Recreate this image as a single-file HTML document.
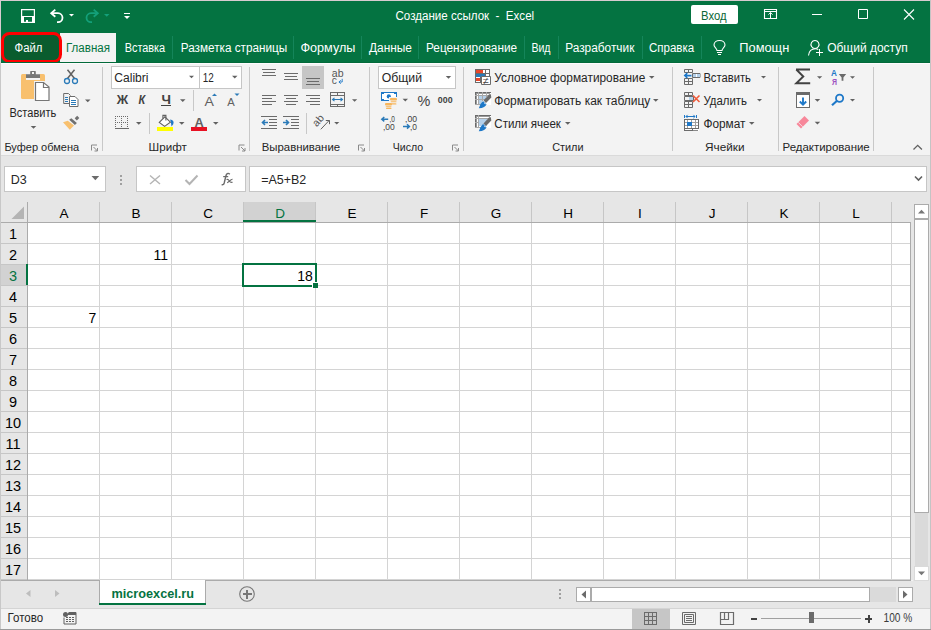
<!DOCTYPE html>
<html><head><meta charset="utf-8"><title>Excel</title>
<style>html,body{margin:0;padding:0;width:931px;height:630px;overflow:hidden;background:#fff}svg{display:block}text{white-space:pre}</style>
</head><body>
<svg width="931" height="630" viewBox="0 0 931 630" shape-rendering="crispEdges">
<rect x="0" y="0" width="931" height="630" fill="#f3f3f3" />
<rect x="0" y="0" width="931" height="63" fill="#047341" />
<rect x="0" y="0" width="931" height="1" fill="#d8ccd0" />
<rect x="0" y="0" width="1" height="63" fill="#d8ccd0" />
<rect x="0" y="63" width="1" height="567" fill="#c8c8c8" />
<rect x="930" y="0" width="1" height="630" fill="#c4c4c4" />
<text x="395.50" y="20" font-family="Liberation Sans" font-size="12" fill="#ffffff" textLength="138.64" lengthAdjust="spacingAndGlyphs">Создание ссылок  -  Excel</text>
<rect x="691" y="5" width="47" height="19" rx="2" fill="#ffffff" shape-rendering="geometricPrecision"/>
<text x="701.10" y="20" font-family="Liberation Sans" font-size="12.5" fill="#0b6636" textLength="25.46" lengthAdjust="spacingAndGlyphs">Вход</text>
<rect x="60" y="33" width="56" height="30" fill="#f3f3f3" />
<rect x="2.5" y="33.5" width="58" height="28" rx="7" ry="7" fill="#0a5c2e" stroke="#ff0000" stroke-width="3" shape-rendering="geometricPrecision"/>
<text x="14.60" y="52" font-family="Liberation Sans" font-size="12" fill="#ffffff" textLength="27.90" lengthAdjust="spacingAndGlyphs">Файл</text>
<text x="66.00" y="52" font-family="Liberation Sans" font-size="12" fill="#047341" textLength="43.98" lengthAdjust="spacingAndGlyphs">Главная</text>
<text x="124.70" y="52" font-family="Liberation Sans" font-size="12" fill="#ffffff" textLength="40.50" lengthAdjust="spacingAndGlyphs">Вставка</text>
<text x="180.80" y="52" font-family="Liberation Sans" font-size="12" fill="#ffffff" textLength="106.41" lengthAdjust="spacingAndGlyphs">Разметка страницы</text>
<text x="300.50" y="52" font-family="Liberation Sans" font-size="12" fill="#ffffff" textLength="54.86" lengthAdjust="spacingAndGlyphs">Формулы</text>
<text x="369.00" y="52" font-family="Liberation Sans" font-size="12" fill="#ffffff" textLength="42.88" lengthAdjust="spacingAndGlyphs">Данные</text>
<text x="426.00" y="52" font-family="Liberation Sans" font-size="12" fill="#ffffff" textLength="91.08" lengthAdjust="spacingAndGlyphs">Рецензирование</text>
<text x="531.40" y="52" font-family="Liberation Sans" font-size="12" fill="#ffffff" textLength="19.10" lengthAdjust="spacingAndGlyphs">Вид</text>
<text x="565.20" y="52" font-family="Liberation Sans" font-size="12" fill="#ffffff" textLength="69.16" lengthAdjust="spacingAndGlyphs">Разработчик</text>
<text x="649.00" y="52" font-family="Liberation Sans" font-size="12" fill="#ffffff" textLength="45.19" lengthAdjust="spacingAndGlyphs">Справка</text>
<text x="739.30" y="52" font-family="Liberation Sans" font-size="12" fill="#ffffff" textLength="49.97" lengthAdjust="spacingAndGlyphs">Помощн</text>
<text x="827.20" y="52" font-family="Liberation Sans" font-size="12" fill="#ffffff" textLength="80.50" lengthAdjust="spacingAndGlyphs">Общий доступ</text>
<rect x="172" y="36" width="1" height="23" fill="#15855a" />
<rect x="293" y="36" width="1" height="23" fill="#15855a" />
<rect x="361" y="36" width="1" height="23" fill="#15855a" />
<rect x="418" y="36" width="1" height="23" fill="#15855a" />
<rect x="524" y="36" width="1" height="23" fill="#15855a" />
<rect x="558" y="36" width="1" height="23" fill="#15855a" />
<rect x="642" y="36" width="1" height="23" fill="#15855a" />
<rect x="701" y="36" width="1" height="23" fill="#15855a" />
<rect x="1" y="63" width="929" height="92" fill="#f3f3f3" />
<rect x="1" y="155" width="929" height="1" fill="#dadada" />
<rect x="1" y="63" width="929" height="1" fill="#fdfbfd" />
<rect x="1" y="62" width="929" height="1" fill="#036a3a" />
<rect x="102" y="67" width="1" height="84" fill="#c8c8c8" />
<rect x="249" y="67" width="1" height="84" fill="#c8c8c8" />
<rect x="369" y="67" width="1" height="84" fill="#c8c8c8" />
<rect x="463" y="67" width="1" height="84" fill="#c8c8c8" />
<rect x="672" y="67" width="1" height="84" fill="#c8c8c8" />
<rect x="778" y="67" width="1" height="84" fill="#c8c8c8" />
<rect x="873" y="67" width="1" height="84" fill="#c8c8c8" />
<text x="4.40" y="151" font-family="Liberation Sans" font-size="11" fill="#262626" textLength="74.72" lengthAdjust="spacingAndGlyphs">Буфер обмена</text>
<text x="148.60" y="151" font-family="Liberation Sans" font-size="11" fill="#262626" textLength="38.24" lengthAdjust="spacingAndGlyphs">Шрифт</text>
<text x="261.70" y="151" font-family="Liberation Sans" font-size="11" fill="#262626" textLength="78.42" lengthAdjust="spacingAndGlyphs">Выравнивание</text>
<text x="392.80" y="151" font-family="Liberation Sans" font-size="11" fill="#262626" textLength="30.31" lengthAdjust="spacingAndGlyphs">Число</text>
<text x="552.20" y="151" font-family="Liberation Sans" font-size="11" fill="#262626" textLength="31.34" lengthAdjust="spacingAndGlyphs">Стили</text>
<text x="705.00" y="151" font-family="Liberation Sans" font-size="11" fill="#262626" textLength="39.55" lengthAdjust="spacingAndGlyphs">Ячейки</text>
<text x="782.50" y="151" font-family="Liberation Sans" font-size="11" fill="#262626" textLength="87.22" lengthAdjust="spacingAndGlyphs">Редактирование</text>
<text x="9.50" y="116.5" font-family="Liberation Sans" font-size="12" fill="#262626" textLength="46.73" lengthAdjust="spacingAndGlyphs">Вставить</text>
<rect x="111" y="66" width="89" height="23" fill="#ffffff" />
<rect x="111" y="66" width="89" height="1" fill="#c6c6c6" />
<rect x="111" y="88" width="89" height="1" fill="#c6c6c6" />
<rect x="111" y="66" width="1" height="23" fill="#c6c6c6" />
<rect x="199" y="66" width="1" height="23" fill="#c6c6c6" />
<rect x="199" y="66" width="43" height="23" fill="#ffffff" />
<rect x="199" y="66" width="43" height="1" fill="#c6c6c6" />
<rect x="199" y="88" width="43" height="1" fill="#c6c6c6" />
<rect x="199" y="66" width="1" height="23" fill="#c6c6c6" />
<rect x="241" y="66" width="1" height="23" fill="#c6c6c6" />
<text x="114.30" y="82" font-family="Liberation Sans" font-size="12" fill="#262626" textLength="34.17" lengthAdjust="spacingAndGlyphs">Calibri</text>
<text x="202.70" y="82" font-family="Liberation Sans" font-size="12" fill="#262626" textLength="11.03" lengthAdjust="spacingAndGlyphs">12</text>
<rect x="378" y="66" width="78" height="23" fill="#ffffff" />
<rect x="378" y="66" width="78" height="1" fill="#c6c6c6" />
<rect x="378" y="88" width="78" height="1" fill="#c6c6c6" />
<rect x="378" y="66" width="1" height="23" fill="#c6c6c6" />
<rect x="455" y="66" width="1" height="23" fill="#c6c6c6" />
<text x="381.70" y="82" font-family="Liberation Sans" font-size="12" fill="#262626" textLength="40.32" lengthAdjust="spacingAndGlyphs">Общий</text>
<text x="494.30" y="82" font-family="Liberation Sans" font-size="12" fill="#262626" textLength="150.98" lengthAdjust="spacingAndGlyphs">Условное форматирование</text>
<text x="494.30" y="105" font-family="Liberation Sans" font-size="12" fill="#262626" textLength="156.00" lengthAdjust="spacingAndGlyphs">Форматировать как таблицу</text>
<text x="494.30" y="128" font-family="Liberation Sans" font-size="12" fill="#262626" textLength="66.58" lengthAdjust="spacingAndGlyphs">Стили ячеек</text>
<text x="703.40" y="82" font-family="Liberation Sans" font-size="12" fill="#262626" textLength="47.54" lengthAdjust="spacingAndGlyphs">Вставить</text>
<text x="703.40" y="105" font-family="Liberation Sans" font-size="12" fill="#262626" textLength="43.54" lengthAdjust="spacingAndGlyphs">Удалить</text>
<text x="703.40" y="128" font-family="Liberation Sans" font-size="12" fill="#262626" textLength="42.10" lengthAdjust="spacingAndGlyphs">Формат</text>
<rect x="1" y="156" width="929" height="46" fill="#e6e6e6" />
<rect x="4" y="166" width="102" height="26" fill="#ffffff" />
<rect x="4" y="166" width="102" height="1" fill="#c6c6c6" />
<rect x="4" y="191" width="102" height="1" fill="#c6c6c6" />
<rect x="4" y="166" width="1" height="26" fill="#c6c6c6" />
<rect x="105" y="166" width="1" height="26" fill="#c6c6c6" />
<text x="10.64" y="184" font-family="Liberation Sans" font-size="13" fill="#262626" textLength="15.98" lengthAdjust="spacingAndGlyphs">D3</text>
<rect x="136" y="166" width="110" height="26" fill="#ffffff" />
<rect x="136" y="166" width="110" height="1" fill="#c6c6c6" />
<rect x="136" y="191" width="110" height="1" fill="#c6c6c6" />
<rect x="136" y="166" width="1" height="26" fill="#c6c6c6" />
<rect x="245" y="166" width="1" height="26" fill="#c6c6c6" />
<rect x="249" y="166" width="678" height="26" fill="#ffffff" />
<rect x="249" y="166" width="678" height="1" fill="#c6c6c6" />
<rect x="249" y="191" width="678" height="1" fill="#c6c6c6" />
<rect x="249" y="166" width="1" height="26" fill="#c6c6c6" />
<rect x="926" y="166" width="1" height="26" fill="#c6c6c6" />
<text x="261.20" y="184" font-family="Liberation Sans" font-size="13" fill="#262626" textLength="45.12" lengthAdjust="spacingAndGlyphs">=A5+B2</text>
<rect x="1" y="202" width="912" height="378" fill="#e6e6e6" />
<rect x="28" y="223" width="882" height="357" fill="#ffffff" />
<rect x="27" y="223" width="1" height="357" fill="#d4d4d4" />
<rect x="99" y="223" width="1" height="357" fill="#d4d4d4" />
<rect x="171" y="223" width="1" height="357" fill="#d4d4d4" />
<rect x="243" y="223" width="1" height="357" fill="#d4d4d4" />
<rect x="315" y="223" width="1" height="357" fill="#d4d4d4" />
<rect x="387" y="223" width="1" height="357" fill="#d4d4d4" />
<rect x="459" y="223" width="1" height="357" fill="#d4d4d4" />
<rect x="531" y="223" width="1" height="357" fill="#d4d4d4" />
<rect x="603" y="223" width="1" height="357" fill="#d4d4d4" />
<rect x="675" y="223" width="1" height="357" fill="#d4d4d4" />
<rect x="747" y="223" width="1" height="357" fill="#d4d4d4" />
<rect x="819" y="223" width="1" height="357" fill="#d4d4d4" />
<rect x="891" y="223" width="1" height="357" fill="#d4d4d4" />
<rect x="28" y="243" width="882" height="1" fill="#d4d4d4" />
<rect x="28" y="264" width="882" height="1" fill="#d4d4d4" />
<rect x="28" y="285" width="882" height="1" fill="#d4d4d4" />
<rect x="28" y="306" width="882" height="1" fill="#d4d4d4" />
<rect x="28" y="327" width="882" height="1" fill="#d4d4d4" />
<rect x="28" y="348" width="882" height="1" fill="#d4d4d4" />
<rect x="28" y="369" width="882" height="1" fill="#d4d4d4" />
<rect x="28" y="390" width="882" height="1" fill="#d4d4d4" />
<rect x="28" y="411" width="882" height="1" fill="#d4d4d4" />
<rect x="28" y="432" width="882" height="1" fill="#d4d4d4" />
<rect x="28" y="453" width="882" height="1" fill="#d4d4d4" />
<rect x="28" y="474" width="882" height="1" fill="#d4d4d4" />
<rect x="28" y="495" width="882" height="1" fill="#d4d4d4" />
<rect x="28" y="516" width="882" height="1" fill="#d4d4d4" />
<rect x="28" y="537" width="882" height="1" fill="#d4d4d4" />
<rect x="28" y="558" width="882" height="1" fill="#d4d4d4" />
<rect x="28" y="579" width="882" height="1" fill="#d4d4d4" />
<rect x="243" y="202" width="73" height="20" fill="#d2d2d2" />
<rect x="27" y="202" width="1" height="20" fill="#c6c6c6" />
<rect x="99" y="202" width="1" height="20" fill="#c6c6c6" />
<rect x="171" y="202" width="1" height="20" fill="#c6c6c6" />
<rect x="243" y="202" width="1" height="20" fill="#c6c6c6" />
<rect x="315" y="202" width="1" height="20" fill="#c6c6c6" />
<rect x="387" y="202" width="1" height="20" fill="#c6c6c6" />
<rect x="459" y="202" width="1" height="20" fill="#c6c6c6" />
<rect x="531" y="202" width="1" height="20" fill="#c6c6c6" />
<rect x="603" y="202" width="1" height="20" fill="#c6c6c6" />
<rect x="675" y="202" width="1" height="20" fill="#c6c6c6" />
<rect x="747" y="202" width="1" height="20" fill="#c6c6c6" />
<rect x="819" y="202" width="1" height="20" fill="#c6c6c6" />
<rect x="891" y="202" width="1" height="20" fill="#c6c6c6" />
<rect x="1" y="222" width="909" height="1" fill="#ababab" />
<rect x="243" y="220" width="73" height="2" fill="#047341" />
<text x="64" y="218" font-family="Liberation Sans" font-size="13.5" fill="#000000" text-anchor="middle">A</text>
<text x="136" y="218" font-family="Liberation Sans" font-size="13.5" fill="#000000" text-anchor="middle">B</text>
<text x="208" y="218" font-family="Liberation Sans" font-size="13.5" fill="#000000" text-anchor="middle">C</text>
<text x="280" y="218" font-family="Liberation Sans" font-size="13.5" fill="#047341" text-anchor="middle">D</text>
<text x="352" y="218" font-family="Liberation Sans" font-size="13.5" fill="#000000" text-anchor="middle">E</text>
<text x="424" y="218" font-family="Liberation Sans" font-size="13.5" fill="#000000" text-anchor="middle">F</text>
<text x="496" y="218" font-family="Liberation Sans" font-size="13.5" fill="#000000" text-anchor="middle">G</text>
<text x="568" y="218" font-family="Liberation Sans" font-size="13.5" fill="#000000" text-anchor="middle">H</text>
<text x="640" y="218" font-family="Liberation Sans" font-size="13.5" fill="#000000" text-anchor="middle">I</text>
<text x="712" y="218" font-family="Liberation Sans" font-size="13.5" fill="#000000" text-anchor="middle">J</text>
<text x="784" y="218" font-family="Liberation Sans" font-size="13.5" fill="#000000" text-anchor="middle">K</text>
<text x="856" y="218" font-family="Liberation Sans" font-size="13.5" fill="#000000" text-anchor="middle">L</text>
<rect x="1" y="264" width="26" height="21" fill="#d2d2d2" />
<rect x="1" y="243" width="26" height="1" fill="#c6c6c6" />
<rect x="1" y="264" width="26" height="1" fill="#c6c6c6" />
<rect x="1" y="285" width="26" height="1" fill="#c6c6c6" />
<rect x="1" y="306" width="26" height="1" fill="#c6c6c6" />
<rect x="1" y="327" width="26" height="1" fill="#c6c6c6" />
<rect x="1" y="348" width="26" height="1" fill="#c6c6c6" />
<rect x="1" y="369" width="26" height="1" fill="#c6c6c6" />
<rect x="1" y="390" width="26" height="1" fill="#c6c6c6" />
<rect x="1" y="411" width="26" height="1" fill="#c6c6c6" />
<rect x="1" y="432" width="26" height="1" fill="#c6c6c6" />
<rect x="1" y="453" width="26" height="1" fill="#c6c6c6" />
<rect x="1" y="474" width="26" height="1" fill="#c6c6c6" />
<rect x="1" y="495" width="26" height="1" fill="#c6c6c6" />
<rect x="1" y="516" width="26" height="1" fill="#c6c6c6" />
<rect x="1" y="537" width="26" height="1" fill="#c6c6c6" />
<rect x="1" y="558" width="26" height="1" fill="#c6c6c6" />
<rect x="1" y="579" width="26" height="1" fill="#c6c6c6" />
<rect x="27" y="202" width="1" height="378" fill="#ababab" />
<rect x="26" y="264" width="2" height="21" fill="#047341" />
<text x="13" y="239" font-family="Liberation Sans" font-size="14.5" fill="#000000" text-anchor="middle">1</text>
<text x="13" y="260" font-family="Liberation Sans" font-size="14.5" fill="#000000" text-anchor="middle">2</text>
<text x="13" y="281" font-family="Liberation Sans" font-size="14.5" fill="#047341" text-anchor="middle">3</text>
<text x="13" y="302" font-family="Liberation Sans" font-size="14.5" fill="#000000" text-anchor="middle">4</text>
<text x="13" y="323" font-family="Liberation Sans" font-size="14.5" fill="#000000" text-anchor="middle">5</text>
<text x="13" y="344" font-family="Liberation Sans" font-size="14.5" fill="#000000" text-anchor="middle">6</text>
<text x="13" y="365" font-family="Liberation Sans" font-size="14.5" fill="#000000" text-anchor="middle">7</text>
<text x="13" y="386" font-family="Liberation Sans" font-size="14.5" fill="#000000" text-anchor="middle">8</text>
<text x="13" y="407" font-family="Liberation Sans" font-size="14.5" fill="#000000" text-anchor="middle">9</text>
<text x="13" y="428" font-family="Liberation Sans" font-size="14.5" fill="#000000" text-anchor="middle">10</text>
<text x="13" y="449" font-family="Liberation Sans" font-size="14.5" fill="#000000" text-anchor="middle">11</text>
<text x="13" y="470" font-family="Liberation Sans" font-size="14.5" fill="#000000" text-anchor="middle">12</text>
<text x="13" y="491" font-family="Liberation Sans" font-size="14.5" fill="#000000" text-anchor="middle">13</text>
<text x="13" y="512" font-family="Liberation Sans" font-size="14.5" fill="#000000" text-anchor="middle">14</text>
<text x="13" y="533" font-family="Liberation Sans" font-size="14.5" fill="#000000" text-anchor="middle">15</text>
<text x="13" y="554" font-family="Liberation Sans" font-size="14.5" fill="#000000" text-anchor="middle">16</text>
<text x="13" y="575" font-family="Liberation Sans" font-size="14.5" fill="#000000" text-anchor="middle">17</text>
<rect x="910" y="222" width="1" height="359" fill="#ababab" />
<rect x="1" y="580" width="910" height="1" fill="#ababab" />
<text x="168" y="259.5" font-family="Liberation Sans" font-size="14" fill="#000000" text-anchor="end">11</text>
<text x="312.9" y="280.7" font-family="Liberation Sans" font-size="14" fill="#000000" text-anchor="end">18</text>
<text x="96.3" y="322.9" font-family="Liberation Sans" font-size="14" fill="#000000" text-anchor="end">7</text>
<rect x="242" y="263" width="75" height="2" fill="#047341" />
<rect x="242" y="285" width="75" height="2" fill="#047341" />
<rect x="242" y="263" width="2" height="24" fill="#047341" />
<rect x="315" y="263" width="2" height="24" fill="#047341" />
<rect x="312" y="282" width="6" height="6" fill="#ffffff" />
<rect x="313" y="283" width="5" height="5" fill="#047341" />
<rect x="1" y="581" width="929" height="27" fill="#e6e6e6" />
<rect x="99" y="580" width="107" height="24" fill="#ffffff" />
<rect x="99" y="580" width="1" height="24" fill="#ababab" />
<rect x="205" y="580" width="1" height="24" fill="#ababab" />
<rect x="99" y="603" width="107" height="2" fill="#047341" />
<text x="111.50" y="598" font-family="Liberation Sans" font-size="13.5" fill="#047341" font-weight="bold" textLength="82.53" lengthAdjust="spacingAndGlyphs">microexcel.ru</text>
<rect x="1" y="608" width="929" height="1" fill="#d4d4d4" />
<rect x="1" y="609" width="929" height="20" fill="#f3f3f3" />
<rect x="0" y="629" width="931" height="1" fill="#9a9a9a" />
<text x="7.60" y="622" font-family="Liberation Sans" font-size="12" fill="#262626" textLength="35.59" lengthAdjust="spacingAndGlyphs">Готово</text>
<rect x="632" y="609" width="38" height="20" fill="#c6c6c6" />
<text x="883.60" y="622" font-family="Liberation Sans" font-size="12" fill="#3a3a3a" textLength="28.72" lengthAdjust="spacingAndGlyphs">100 %</text>
<path d="M21.6 9.6H34.4V22.4H21.6Z" fill="none" stroke="#ffffff" stroke-width="1.2" shape-rendering="geometricPrecision"/>
<rect x="21" y="16" width="14" height="1" fill="#ffffff" />
<rect x="21" y="16" width="3" height="7" fill="#ffffff" />
<rect x="32" y="16" width="3" height="7" fill="#ffffff" />
<rect x="26" y="20" width="2" height="2" fill="#ffffff" />
<path d="M51.5 13.2H58A4.5 4.5 0 0 1 58 22.2H57" fill="none" stroke="#ffffff" stroke-width="1.8" shape-rendering="geometricPrecision"/>
<path d="M55.3 9.6L51.2 13.2L55.3 16.8" fill="none" stroke="#ffffff" stroke-width="1.8" shape-rendering="geometricPrecision"/>
<path d="M69 14L74 14L71.5 16.5Z" fill="#ffffff" shape-rendering="geometricPrecision"/>
<path d="M97.5 13.2H91A4.5 4.5 0 0 0 91 22.2H92" fill="none" stroke="#14a07a" stroke-width="1.8" shape-rendering="geometricPrecision"/>
<path d="M93.7 9.6L97.8 13.2L93.7 16.8" fill="none" stroke="#14a07a" stroke-width="1.8" shape-rendering="geometricPrecision"/>
<path d="M104 14L109.5 14L106.75 16.75Z" fill="#14a07a" shape-rendering="geometricPrecision"/>
<rect x="124" y="13" width="6" height="1" fill="#ffffff" />
<path d="M124 16L130 16L127.0 19.0Z" fill="#ffffff" shape-rendering="geometricPrecision"/>
<path d="M764.5 9.5H776.5V18.5H764.5Z" fill="none" stroke="#ffffff" stroke-width="1.1" shape-rendering="geometricPrecision"/>
<rect x="765" y="11" width="11" height="1" fill="#ffffff" />
<path d="M770.5 18.5V12.5M768.5 14.6L770.5 12.6L772.5 14.6" fill="none" stroke="#ffffff" stroke-width="1" shape-rendering="geometricPrecision"/>
<rect x="812" y="14" width="10" height="1" fill="#ffffff" />
<path d="M858.5 9.5H867.5V18.5H858.5Z" fill="none" stroke="#ffffff" stroke-width="1" shape-rendering="geometricPrecision"/>
<path d="M904 9.5L914 19.5M914 9.5L904 19.5" fill="none" stroke="#ffffff" stroke-width="1.1" shape-rendering="geometricPrecision"/>
<path d="M717 50.5C717 48.5 714 47.2 714 45C714 42.2 716.5 40.5 719.5 40.5C722.5 40.5 725 42.2 725 45C725 47.2 722 48.5 722 50.5Z" fill="none" stroke="#ffffff" stroke-width="1.1" shape-rendering="geometricPrecision"/>
<rect x="717" y="52" width="5" height="1" fill="#ffffff" />
<rect x="718" y="54" width="3" height="1" fill="#ffffff" />
<path d="M815 40.5A4 4 0 1 1 814.99 40.5Z" fill="none" stroke="#ffffff" stroke-width="1.1" shape-rendering="geometricPrecision"/>
<path d="M808.5 55.5C809 51 812 48.8 815.5 48.8C816.5 48.8 817.5 49 818.3 49.4" fill="none" stroke="#ffffff" stroke-width="1.1" shape-rendering="geometricPrecision"/>
<rect x="816" y="52" width="7" height="1" fill="#ffffff" />
<rect x="819" y="49" width="1" height="7" fill="#ffffff" />
<rect x="21" y="74" width="24" height="25" rx="1.5" fill="#f8c06e" shape-rendering="geometricPrecision"/>
<rect x="26" y="74" width="14" height="6" fill="#f3f3f3" />
<path d="M26 74.2H30.2V71.5Q30.2 71 30.7 71H35.3Q35.8 71 35.8 71.5V74.2H40V78H26Z" fill="#767676" shape-rendering="geometricPrecision"/>
<rect x="32" y="72" width="2" height="2" fill="#f3f3f3" />
<path d="M34 81V101.5H50V86.5L44.5 81Z" fill="#f3f3f3" shape-rendering="geometricPrecision"/>
<path d="M35.5 82.5V100.5H49V87L43.5 82.5Z" fill="#ffffff" stroke="#767676" stroke-width="1.2" shape-rendering="geometricPrecision"/>
<path d="M43.5 82.5V87.5H49" fill="none" stroke="#767676" stroke-width="1.2" shape-rendering="geometricPrecision"/>
<path d="M30.7 126L36.3 126L33.5 128.8Z" fill="#616161" shape-rendering="geometricPrecision"/>
<path d="M67.5 69.8L74.5 78.5" fill="none" stroke="#616161" stroke-width="1.5" shape-rendering="geometricPrecision"/>
<path d="M74.5 69.8L67.5 78.5" fill="none" stroke="#616161" stroke-width="1.5" shape-rendering="geometricPrecision"/>
<circle cx="67" cy="81" r="2.5" fill="none" stroke="#2a7ab8" stroke-width="1.3" shape-rendering="geometricPrecision"/>
<circle cx="75" cy="81" r="2.5" fill="none" stroke="#2a7ab8" stroke-width="1.3" shape-rendering="geometricPrecision"/>
<path d="M63.7 93.5V103.5H69.5M63.7 93.5H68.5L70.5 95.5" fill="none" stroke="#6b6b6b" stroke-width="1" shape-rendering="geometricPrecision"/>
<path d="M69.5 96.5V106.5H78V99.5L75 96.5Z" fill="#ffffff" stroke="#6b6b6b" stroke-width="1" shape-rendering="geometricPrecision"/>
<rect x="65" y="97" width="3" height="1" fill="#2a7ab8" />
<rect x="65" y="99" width="3" height="1" fill="#2a7ab8" />
<rect x="65" y="101" width="3" height="1" fill="#2a7ab8" />
<rect x="71" y="100" width="5" height="1" fill="#2a7ab8" />
<rect x="71" y="102" width="5" height="1" fill="#2a7ab8" />
<rect x="71" y="104" width="5" height="1" fill="#2a7ab8" />
<path d="M85 99.5L90.5 99.5L87.75 102.25Z" fill="#616161" shape-rendering="geometricPrecision"/>
<path d="M77.2 115.8L79.3 117.9L76.8 120.4L74.7 118.3Z" fill="#707070" shape-rendering="geometricPrecision"/>
<path d="M71.3 118.2L76.9 123L74.9 124.9L69.2 119.7Z" fill="#707070" shape-rendering="geometricPrecision"/>
<path d="M63 122.3L67.8 120.7L74 125.6L69.8 129.7Z" fill="#f8c06e" shape-rendering="geometricPrecision"/>
<path d="M91.5 150.5V145.0H97" fill="none" stroke="#8a8a8a" stroke-width="1" shape-rendering="geometricPrecision"/>
<path d="M93.5 147.0L97.5 151.0M97.5 148.0V151.0H94.5" fill="none" stroke="#8a8a8a" stroke-width="1" shape-rendering="geometricPrecision"/>
<path d="M239.0 150.5V145.0H244.5" fill="none" stroke="#8a8a8a" stroke-width="1" shape-rendering="geometricPrecision"/>
<path d="M241.0 147.0L245.0 151.0M245.0 148.0V151.0H242.0" fill="none" stroke="#8a8a8a" stroke-width="1" shape-rendering="geometricPrecision"/>
<path d="M358.5 150.5V145.0H364" fill="none" stroke="#8a8a8a" stroke-width="1" shape-rendering="geometricPrecision"/>
<path d="M360.5 147.0L364.5 151.0M364.5 148.0V151.0H361.5" fill="none" stroke="#8a8a8a" stroke-width="1" shape-rendering="geometricPrecision"/>
<path d="M452.5 150.5V145.0H458" fill="none" stroke="#8a8a8a" stroke-width="1" shape-rendering="geometricPrecision"/>
<path d="M454.5 147.0L458.5 151.0M458.5 148.0V151.0H455.5" fill="none" stroke="#8a8a8a" stroke-width="1" shape-rendering="geometricPrecision"/>
<path d="M189 75.7L194 75.7L191.5 78.2Z" fill="#616161" shape-rendering="geometricPrecision"/>
<path d="M232 75.7L237.5 75.7L234.75 78.45Z" fill="#616161" shape-rendering="geometricPrecision"/>
<text x="116.75" y="104.3" font-family="Liberation Sans" font-size="12" fill="#424242" font-weight="bold" textLength="11.39" lengthAdjust="spacingAndGlyphs">Ж</text>
<text x="138.60" y="104.3" font-family="Liberation Sans" font-size="12" fill="#424242" font-weight="bold" font-style="italic" textLength="6.72" lengthAdjust="spacingAndGlyphs">К</text>
<text x="161.50" y="104.3" font-family="Liberation Sans" font-size="12" fill="#424242" font-weight="bold" textLength="9.49" lengthAdjust="spacingAndGlyphs">Ч</text>
<rect x="161" y="105" width="10" height="1" fill="#424242" />
<path d="M180 99.3L185.5 99.3L182.75 102.05Z" fill="#616161" shape-rendering="geometricPrecision"/>
<rect x="193" y="90" width="1" height="21" fill="#c8c8c8" />
<text x="204.40" y="105.8" font-family="Liberation Sans" font-size="13.5" fill="#616161" textLength="9.40" lengthAdjust="spacingAndGlyphs">A</text>
<path d="M212 96L214.5 93.5L217 96Z" fill="#2a7ab8" shape-rendering="geometricPrecision"/>
<text x="227.30" y="105.8" font-family="Liberation Sans" font-size="10.5" fill="#616161" textLength="7.50" lengthAdjust="spacingAndGlyphs">A</text>
<path d="M234.5 93.5L239.5 93.5L237 96Z" fill="#2a7ab8" shape-rendering="geometricPrecision"/>
<rect x="115" y="116" width="1" height="1" fill="#6b6b6b" />
<rect x="115" y="118" width="1" height="1" fill="#6b6b6b" />
<rect x="115" y="120" width="1" height="1" fill="#6b6b6b" />
<rect x="115" y="122" width="1" height="1" fill="#6b6b6b" />
<rect x="115" y="124" width="1" height="1" fill="#6b6b6b" />
<rect x="115" y="126" width="1" height="1" fill="#6b6b6b" />
<rect x="117" y="116" width="1" height="1" fill="#6b6b6b" />
<rect x="117" y="122" width="1" height="1" fill="#6b6b6b" />
<rect x="119" y="116" width="1" height="1" fill="#6b6b6b" />
<rect x="119" y="122" width="1" height="1" fill="#6b6b6b" />
<rect x="121" y="116" width="1" height="1" fill="#6b6b6b" />
<rect x="121" y="118" width="1" height="1" fill="#6b6b6b" />
<rect x="121" y="120" width="1" height="1" fill="#6b6b6b" />
<rect x="121" y="122" width="1" height="1" fill="#6b6b6b" />
<rect x="121" y="124" width="1" height="1" fill="#6b6b6b" />
<rect x="121" y="126" width="1" height="1" fill="#6b6b6b" />
<rect x="123" y="116" width="1" height="1" fill="#6b6b6b" />
<rect x="123" y="122" width="1" height="1" fill="#6b6b6b" />
<rect x="125" y="116" width="1" height="1" fill="#6b6b6b" />
<rect x="125" y="122" width="1" height="1" fill="#6b6b6b" />
<rect x="127" y="116" width="1" height="1" fill="#6b6b6b" />
<rect x="127" y="118" width="1" height="1" fill="#6b6b6b" />
<rect x="127" y="120" width="1" height="1" fill="#6b6b6b" />
<rect x="127" y="122" width="1" height="1" fill="#6b6b6b" />
<rect x="127" y="124" width="1" height="1" fill="#6b6b6b" />
<rect x="127" y="126" width="1" height="1" fill="#6b6b6b" />
<rect x="115" y="128" width="14" height="1" fill="#6b6b6b" />
<path d="M136 122L141.5 122L138.75 124.75Z" fill="#616161" shape-rendering="geometricPrecision"/>
<rect x="149" y="113" width="1" height="21" fill="#c8c8c8" />
<path d="M159.3 122.4L164.9 116.8L170.4 122.1L164.6 126.4Z" fill="#ffffff" stroke="#616161" stroke-width="1.1" shape-rendering="geometricPrecision"/>
<path d="M162.9 118.6V115.4H165.9V120.6" fill="none" stroke="#616161" stroke-width="1.1" shape-rendering="geometricPrecision"/>
<path d="M170 119.5Q174.8 120.3 173.2 124.2L171.5 126.5L170.8 121.8Z" fill="#1e78c8" shape-rendering="geometricPrecision"/>
<rect x="157" y="127" width="16" height="4" fill="#ffff00" />
<path d="M179 122L184.5 122L181.75 124.75Z" fill="#616161" shape-rendering="geometricPrecision"/>
<text x="194.50" y="126.8" font-family="Liberation Sans" font-size="13.5" fill="#616161" font-weight="bold" textLength="9.26" lengthAdjust="spacingAndGlyphs">A</text>
<rect x="191" y="127" width="16" height="4" fill="#e81123" />
<path d="M213 122L218.5 122L215.75 124.75Z" fill="#616161" shape-rendering="geometricPrecision"/>
<rect x="262" y="69" width="14" height="1" fill="#6b6b6b" />
<rect x="263" y="72" width="12" height="1" fill="#6b6b6b" />
<rect x="262" y="75" width="14" height="1" fill="#6b6b6b" />
<rect x="284" y="73" width="14" height="1" fill="#6b6b6b" />
<rect x="285" y="76" width="12" height="1" fill="#6b6b6b" />
<rect x="284" y="79" width="14" height="1" fill="#6b6b6b" />
<rect x="302" y="66" width="22" height="23" fill="#c6c6c6" />
<rect x="306" y="78" width="14" height="1" fill="#6b6b6b" />
<rect x="307" y="81" width="12" height="1" fill="#6b6b6b" />
<rect x="306" y="84" width="14" height="1" fill="#6b6b6b" />
<text x="331.80" y="76.5" font-family="Liberation Sans" font-size="10.5" fill="#555555" textLength="11.74" lengthAdjust="spacingAndGlyphs">ab</text>
<text x="331.80" y="84.2" font-family="Liberation Sans" font-size="10.5" fill="#555555" textLength="5.15" lengthAdjust="spacingAndGlyphs">c</text>
<path d="M342.2 78.8V82H339M340.8 80.3L338.9 82L340.8 83.7" fill="none" stroke="#1e78c8" stroke-width="0.9" shape-rendering="geometricPrecision"/>
<rect x="262" y="95" width="14" height="1" fill="#6b6b6b" />
<rect x="262" y="98" width="10" height="1" fill="#6b6b6b" />
<rect x="262" y="101" width="14" height="1" fill="#6b6b6b" />
<rect x="262" y="104" width="10" height="1" fill="#6b6b6b" />
<rect x="284" y="95" width="14" height="1" fill="#6b6b6b" />
<rect x="286" y="98" width="10" height="1" fill="#6b6b6b" />
<rect x="284" y="101" width="14" height="1" fill="#6b6b6b" />
<rect x="286" y="104" width="10" height="1" fill="#6b6b6b" />
<rect x="306" y="95" width="14" height="1" fill="#6b6b6b" />
<rect x="310" y="98" width="10" height="1" fill="#6b6b6b" />
<rect x="306" y="101" width="14" height="1" fill="#6b6b6b" />
<rect x="310" y="104" width="10" height="1" fill="#6b6b6b" />
<rect x="330" y="92" width="15" height="1" fill="#6b6b6b" />
<rect x="330" y="106" width="15" height="1" fill="#6b6b6b" />
<rect x="330" y="92" width="1" height="15" fill="#6b6b6b" />
<rect x="344" y="92" width="1" height="15" fill="#6b6b6b" />
<rect x="330" y="95" width="15" height="1" fill="#6b6b6b" />
<rect x="330" y="104" width="15" height="1" fill="#6b6b6b" />
<rect x="337" y="92" width="1" height="3" fill="#6b6b6b" />
<rect x="337" y="104" width="1" height="3" fill="#6b6b6b" />
<path d="M332.5 99.5H342.5M334.5 97.8L332.5 99.5L334.5 101.2M340.5 97.8L342.5 99.5L340.5 101.2" fill="none" stroke="#2a7ab8" stroke-width="1.1" shape-rendering="geometricPrecision"/>
<path d="M352 99.2L357.2 99.2L354.6 101.8Z" fill="#616161" shape-rendering="geometricPrecision"/>
<rect x="261" y="116" width="16" height="1" fill="#6b6b6b" />
<rect x="261" y="128" width="16" height="1" fill="#6b6b6b" />
<rect x="269" y="119" width="8" height="1" fill="#6b6b6b" />
<rect x="269" y="122" width="8" height="1" fill="#6b6b6b" />
<rect x="269" y="125" width="8" height="1" fill="#6b6b6b" />
<path d="M268 122.5H262.5M265 120L262.5 122.5L265 125" fill="none" stroke="#2a7ab8" stroke-width="1.6" shape-rendering="geometricPrecision"/>
<rect x="283" y="116" width="16" height="1" fill="#6b6b6b" />
<rect x="283" y="128" width="16" height="1" fill="#6b6b6b" />
<rect x="291" y="119" width="8" height="1" fill="#6b6b6b" />
<rect x="291" y="122" width="8" height="1" fill="#6b6b6b" />
<rect x="291" y="125" width="8" height="1" fill="#6b6b6b" />
<path d="M283 122.5H288.5M286 120L288.5 122.5L286 125" fill="none" stroke="#2a7ab8" stroke-width="1.6" shape-rendering="geometricPrecision"/>
<rect x="306" y="113" width="1" height="21" fill="#c8c8c8" />
<text x="0" y="0" font-family="Liberation Sans" font-size="10.5" fill="#555555" transform="translate(316.8 127.2) rotate(-48)">ab</text>
<path d="M320.8 129.3L329.3 120.3M325.8 120.5H329.5V124.2" fill="none" stroke="#616161" stroke-width="1" shape-rendering="geometricPrecision"/>
<path d="M334.2 122L339.3 122L336.75 124.55000000000001Z" fill="#616161" shape-rendering="geometricPrecision"/>
<path d="M445.8 76L451.2 76L448.5 78.69999999999999Z" fill="#616161" shape-rendering="geometricPrecision"/>
<rect x="381" y="92" width="16" height="9" fill="#1e78c8" />
<rect x="382" y="94" width="14" height="5" fill="#ffffff" />
<rect x="384" y="93" width="10" height="7" fill="#ffffff" />
<circle cx="388.8" cy="96.4" r="2.1" fill="#1e78c8" shape-rendering="geometricPrecision"/>
<rect x="389" y="97" width="9" height="5" fill="#f3f3f3" />
<rect x="384" y="102" width="9" height="7" fill="#f3f3f3" />
<rect x="390" y="98" width="7" height="2.6" rx="1" fill="#f8b65c" shape-rendering="geometricPrecision"/>
<rect x="390.6" y="101.2" width="6" height="1.1" rx="1" fill="#f8b65c" shape-rendering="geometricPrecision"/>
<rect x="391" y="103.3" width="5.5" height="1.2" rx="1" fill="#f8b65c" shape-rendering="geometricPrecision"/>
<rect x="385" y="103" width="7" height="2.6" rx="1" fill="#f8b65c" shape-rendering="geometricPrecision"/>
<rect x="385.6" y="106.2" width="6" height="1.1" rx="1" fill="#f8b65c" shape-rendering="geometricPrecision"/>
<rect x="386" y="107.8" width="5.5" height="1.2" rx="1" fill="#f8b65c" shape-rendering="geometricPrecision"/>
<path d="M402.6 98.8L408 98.8L405.3 101.49999999999999Z" fill="#616161" shape-rendering="geometricPrecision"/>
<text x="417.50" y="106" font-family="Liberation Sans" font-size="15" fill="#424242" textLength="12.82" lengthAdjust="spacingAndGlyphs">%</text>
<text x="437.80" y="103" font-family="Liberation Sans" font-size="9.5" fill="#424242" font-weight="bold" textLength="14.76" lengthAdjust="spacingAndGlyphs">000</text>
<path d="M388.2 119.2H381.8M384.3 117L381.8 119.2L384.3 121.4" fill="none" stroke="#2a7ab8" stroke-width="1.5" shape-rendering="geometricPrecision"/>
<text x="389.50" y="121.8" font-family="Liberation Sans" font-size="8.5" fill="#424242" textLength="5.39" lengthAdjust="spacingAndGlyphs">,0</text>
<text x="383.00" y="130.4" font-family="Liberation Sans" font-size="8.5" fill="#424242" textLength="11.83" lengthAdjust="spacingAndGlyphs">,00</text>
<text x="405.00" y="121.8" font-family="Liberation Sans" font-size="8.5" fill="#424242" textLength="12.02" lengthAdjust="spacingAndGlyphs">,00</text>
<path d="M403 126.4H409.4M407 124.2L409.4 126.4L407 128.6" fill="none" stroke="#2a7ab8" stroke-width="1.5" shape-rendering="geometricPrecision"/>
<text x="410.00" y="130.4" font-family="Liberation Sans" font-size="8.5" fill="#424242" textLength="7.03" lengthAdjust="spacingAndGlyphs">,0</text>
<rect x="475" y="69" width="14" height="13" fill="#ffffff" />
<rect x="475" y="69" width="15" height="1" fill="#6b6b6b" />
<rect x="475" y="82" width="15" height="1" fill="#6b6b6b" />
<rect x="475" y="69" width="1" height="14" fill="#6b6b6b" />
<rect x="489" y="69" width="1" height="14" fill="#6b6b6b" />
<rect x="480" y="69" width="1" height="14" fill="#6b6b6b" />
<rect x="475" y="73" width="15" height="1" fill="#6b6b6b" />
<rect x="485" y="69" width="1" height="14" fill="#6b6b6b" />
<rect x="475" y="78" width="15" height="1" fill="#6b6b6b" />
<rect x="476" y="70" width="7" height="3" fill="#e8472b" />
<rect x="476" y="74" width="9" height="3" fill="#2a7ab8" />
<rect x="476" y="78" width="4" height="3" fill="#e8472b" />
<path d="M481.5 76.5H490.5V84.5H481.5Z" fill="#ffffff" stroke="#6b6b6b" stroke-width="1" shape-rendering="geometricPrecision"/>
<text x="483.00" y="83.5" font-family="Liberation Sans" font-size="9" fill="#424242" textLength="5.93" lengthAdjust="spacingAndGlyphs">≠</text>
<path d="M649 76L654.5 76L651.75 78.75Z" fill="#616161" shape-rendering="geometricPrecision"/>
<rect x="475" y="92" width="16" height="13" fill="#ffffff" />
<rect x="479" y="96" width="7" height="3" fill="#b4d0ea" />
<rect x="479" y="100" width="3" height="4" fill="#b4d0ea" />
<rect x="475" y="92" width="1" height="13" fill="#6b6b6b" />
<rect x="475" y="92" width="16" height="1" fill="#6b6b6b" />
<rect x="476" y="93" width="1" height="12" fill="#9a9a9a" />
<rect x="476" y="93" width="14" height="1" fill="#9a9a9a" />
<rect x="475" y="104" width="7" height="1" fill="#a8a8a8" />
<rect x="478" y="92" width="1" height="13" fill="#a8a8a8" />
<rect x="482" y="92" width="1" height="9" fill="#a8a8a8" />
<rect x="486" y="92" width="1" height="5" fill="#a8a8a8" />
<rect x="475" y="95" width="15" height="1" fill="#a8a8a8" />
<rect x="475" y="99" width="10" height="1" fill="#a8a8a8" />
<path d="M490.8 94.2L491.3 97.5L486 103L483.5 100.5L489.2 94.2Z" fill="#6b6b6b" shape-rendering="geometricPrecision"/>
<path d="M483 101L486.5 104.2Q485.5 107.8 478.8 108.3Q480.5 103 483 101Z" fill="#1e78c8" shape-rendering="geometricPrecision"/>
<path d="M484.5 102.8L485.3 104.2" fill="none" stroke="#ffffff" stroke-width="0.9" shape-rendering="geometricPrecision"/>
<path d="M653 99L658.5 99L655.75 101.75Z" fill="#616161" shape-rendering="geometricPrecision"/>
<rect x="475" y="115" width="16" height="13" fill="#ffffff" />
<rect x="479" y="119" width="8" height="7" fill="#b4d0ea" />
<rect x="475" y="115" width="1" height="13" fill="#6b6b6b" />
<rect x="475" y="115" width="16" height="1" fill="#6b6b6b" />
<rect x="476" y="116" width="1" height="12" fill="#9a9a9a" />
<rect x="476" y="116" width="14" height="1" fill="#9a9a9a" />
<rect x="475" y="127" width="7" height="1" fill="#a8a8a8" />
<rect x="478" y="115" width="1" height="13" fill="#a8a8a8" />
<rect x="475" y="118" width="15" height="1" fill="#a8a8a8" />
<rect x="475" y="122" width="3" height="1" fill="#a8a8a8" />
<path d="M490.8 117.2L491.3 120.5L486 126L483.5 123.5L489.2 117.2Z" fill="#6b6b6b" shape-rendering="geometricPrecision"/>
<path d="M483 124L486.5 127.2Q485.5 130.8 478.8 131.3Q480.5 126 483 124Z" fill="#1e78c8" shape-rendering="geometricPrecision"/>
<path d="M484.5 125.8L485.3 127.2" fill="none" stroke="#ffffff" stroke-width="0.9" shape-rendering="geometricPrecision"/>
<path d="M565 122L570.5 122L567.75 124.75Z" fill="#616161" shape-rendering="geometricPrecision"/>
<path d="M684.5 69.5H692.5V72.5H684.5ZM688.5 69.5V72.5" fill="none" stroke="#6b6b6b" stroke-width="1" shape-rendering="geometricPrecision"/>
<path d="M684.5 78.5H692.5V84.5H684.5ZM688.5 78.5V84.5M684.5 81.5H692.5" fill="none" stroke="#6b6b6b" stroke-width="1" shape-rendering="geometricPrecision"/>
<path d="M692.5 73.5H700V77.5H692.5Z" fill="#ffffff" stroke="#6b6b6b" stroke-width="1" shape-rendering="geometricPrecision"/>
<rect x="693" y="74" width="3" height="3" fill="#b4d0ea" />
<rect x="697" y="74" width="3" height="3" fill="#b4d0ea" />
<path d="M691.5 75.6H684.8M687.3 73.2L684.8 75.6L687.3 78" fill="none" stroke="#1e78c8" stroke-width="1.6" shape-rendering="geometricPrecision"/>
<path d="M761 76L766 76L763.5 78.5Z" fill="#616161" shape-rendering="geometricPrecision"/>
<path d="M684.5 92.5H692.5V95.5H684.5ZM688.5 92.5V95.5" fill="none" stroke="#6b6b6b" stroke-width="1" shape-rendering="geometricPrecision"/>
<path d="M684.5 101.5H692.5V107.5H684.5ZM688.5 101.5V107.5M684.5 104.5H692.5" fill="none" stroke="#6b6b6b" stroke-width="1" shape-rendering="geometricPrecision"/>
<path d="M684.5 96.5H693.5V100.5H684.5Z" fill="none" stroke="#6b6b6b" stroke-width="1" shape-rendering="geometricPrecision"/>
<rect x="689" y="97" width="4" height="3" fill="#b4d0ea" />
<path d="M693 95.5L699.5 102M699.5 95.5L693 102" fill="none" stroke="#f05a3a" stroke-width="1.6" shape-rendering="geometricPrecision"/>
<path d="M757 99L762 99L759.5 101.5Z" fill="#616161" shape-rendering="geometricPrecision"/>
<rect x="684" y="115" width="1" height="3" fill="#1e78c8" />
<rect x="696" y="115" width="1" height="3" fill="#1e78c8" />
<path d="M686 116.5H695M687.6 114.9L686 116.5L687.6 118.1M693.4 114.9L695 116.5L693.4 118.1" fill="none" stroke="#1e78c8" stroke-width="1" shape-rendering="geometricPrecision"/>
<rect x="684" y="119" width="15" height="12" fill="#ffffff" />
<rect x="687" y="119" width="1" height="10" fill="#a0a0a0" />
<rect x="691" y="119" width="1" height="10" fill="#a0a0a0" />
<rect x="695" y="119" width="1" height="10" fill="#a0a0a0" />
<rect x="684" y="122" width="15" height="1" fill="#a0a0a0" />
<rect x="684" y="125" width="15" height="1" fill="#a0a0a0" />
<rect x="684" y="119" width="15" height="1" fill="#6b6b6b" />
<rect x="684" y="119" width="1" height="12" fill="#6b6b6b" />
<rect x="698" y="119" width="1" height="10" fill="#6b6b6b" />
<rect x="684" y="128" width="15" height="1" fill="#6b6b6b" />
<rect x="684" y="130" width="8" height="1" fill="#6b6b6b" />
<rect x="692" y="128" width="1" height="3" fill="#6b6b6b" />
<rect x="693" y="130" width="5" height="1" fill="#8a8a8a" />
<rect x="687" y="122" width="5" height="4" fill="#1e78c8" />
<path d="M749 122L754.5 122L751.75 124.75Z" fill="#616161" shape-rendering="geometricPrecision"/>
<path d="M796 69.5H810M796.3 69.5L803.3 76.5L796.3 83.2H810.2" fill="none" stroke="#424242" stroke-width="1.9" shape-rendering="geometricPrecision"/>
<path d="M817 76.2L822.2 76.2L819.6 78.80000000000003Z" fill="#616161" shape-rendering="geometricPrecision"/>
<text x="830.90" y="75.7" font-family="Liberation Sans" font-size="9.5" fill="#1e78c8" font-weight="bold" textLength="5.88" lengthAdjust="spacingAndGlyphs">А</text>
<text x="832.00" y="84.9" font-family="Liberation Sans" font-size="9" fill="#9b4fc0" font-weight="bold" textLength="4.96" lengthAdjust="spacingAndGlyphs">Я</text>
<path d="M838.8 74H846.2L843.4 77.5V80.7H841.6V77.5Z" fill="#6b6b6b" shape-rendering="geometricPrecision"/>
<path d="M850 76.2L855 76.2L852.5 78.7Z" fill="#616161" shape-rendering="geometricPrecision"/>
<rect x="796" y="92" width="14" height="16" fill="#6b6b6b" />
<rect x="797" y="95" width="12" height="12" fill="#ffffff" />
<path d="M803 97.5V104.5M799.8 101.5L803 104.7L806.2 101.5" fill="none" stroke="#1e78c8" stroke-width="1.9" shape-rendering="geometricPrecision"/>
<path d="M814.7 99L820.2 99L817.45 101.75Z" fill="#616161" shape-rendering="geometricPrecision"/>
<circle cx="839.6" cy="98.2" r="3.6" fill="none" stroke="#1e78c8" stroke-width="1.8" shape-rendering="geometricPrecision"/>
<path d="M837 100.8L832 105.3" fill="none" stroke="#1e78c8" stroke-width="2.2" shape-rendering="geometricPrecision"/>
<path d="M850 99L855 99L852.5 101.5Z" fill="#616161" shape-rendering="geometricPrecision"/>
<path d="M804.5 116L809 120.5L801 128.5L796.5 124Z" fill="#f7879a" shape-rendering="geometricPrecision"/>
<path d="M798.2 122.3L802.7 126.8" fill="none" stroke="#f3f3f3" stroke-width="0.8" shape-rendering="geometricPrecision"/>
<path d="M814.7 121.8L820.2 121.8L817.45 124.55Z" fill="#616161" shape-rendering="geometricPrecision"/>
<path d="M913.5 149.5L917.7 145.3L921.9 149.5" fill="none" stroke="#616161" stroke-width="1.3" shape-rendering="geometricPrecision"/>
<path d="M91.5 176H99.2L95.35 180.3Z" fill="#6b6b6b" shape-rendering="geometricPrecision"/>
<rect x="120" y="175" width="2" height="2" fill="#a0a0a0" />
<rect x="120" y="179" width="2" height="2" fill="#a0a0a0" />
<rect x="120" y="183" width="2" height="2" fill="#a0a0a0" />
<path d="M150 175.5L160 184M160 175.5L150 184" fill="none" stroke="#b4b4b4" stroke-width="1.4" shape-rendering="geometricPrecision"/>
<path d="M185.5 180L189.5 184L197.5 175.5" fill="none" stroke="#b4b4b4" stroke-width="2" shape-rendering="geometricPrecision"/>
<path d="M229.8 174.2Q228.5 172.9 227.3 173.6Q226.3 174.2 225.9 176L224.2 183Q223.6 185.2 221.6 184.6" fill="none" stroke="#6b6b6b" stroke-width="1.4" shape-rendering="geometricPrecision"/>
<path d="M223.2 176.6H228.2" fill="none" stroke="#6b6b6b" stroke-width="1.2" shape-rendering="geometricPrecision"/>
<path d="M226.5 179.6Q228.2 178.9 229.2 180.8Q230.2 182.8 232.6 182.3M232.6 179.2Q231.5 179 229.5 181L227.2 182.9" fill="none" stroke="#6b6b6b" stroke-width="1.1" shape-rendering="geometricPrecision"/>
<path d="M915 176.5L918.5 180L922 176.5" fill="none" stroke="#616161" stroke-width="1.6" shape-rendering="geometricPrecision"/>
<path d="M11.5 219H24V206.5Z" fill="#b4b4b4" shape-rendering="geometricPrecision"/>
<rect x="913" y="202" width="17" height="379" fill="#e6e6e6" />
<rect x="914" y="204" width="15" height="15" fill="#ffffff" />
<rect x="914" y="204" width="15" height="1" fill="#ababab" />
<rect x="914" y="218" width="15" height="1" fill="#ababab" />
<rect x="914" y="204" width="1" height="15" fill="#ababab" />
<rect x="928" y="204" width="1" height="15" fill="#ababab" />
<path d="M918 213.5H925L921.5 209.8Z" fill="#777777" shape-rendering="geometricPrecision"/>
<rect x="914" y="219" width="15" height="294" fill="#ffffff" />
<rect x="914" y="219" width="15" height="1" fill="#ababab" />
<rect x="914" y="512" width="15" height="1" fill="#ababab" />
<rect x="914" y="219" width="1" height="294" fill="#ababab" />
<rect x="928" y="219" width="1" height="294" fill="#ababab" />
<rect x="915" y="513" width="13" height="53" fill="#dadada" />
<rect x="914" y="566" width="15" height="15" fill="#ffffff" />
<rect x="914" y="566" width="15" height="1" fill="#dadada" />
<rect x="914" y="580" width="15" height="1" fill="#dadada" />
<rect x="914" y="566" width="1" height="15" fill="#dadada" />
<rect x="928" y="566" width="1" height="15" fill="#dadada" />
<path d="M918 571.5H925L921.5 575.2Z" fill="#777777" shape-rendering="geometricPrecision"/>
<path d="M30.5 590L26 593.5L30.5 597Z" fill="#bdbdbd" shape-rendering="geometricPrecision"/>
<path d="M55 590L59.5 593.5L55 597Z" fill="#bdbdbd" shape-rendering="geometricPrecision"/>
<circle cx="247" cy="594" r="7.3" fill="none" stroke="#777777" stroke-width="1.1" shape-rendering="geometricPrecision"/>
<rect x="243" y="593" width="9" height="2" fill="#777777" />
<rect x="246" y="590" width="2" height="9" fill="#777777" />
<rect x="559" y="589" width="2" height="2" fill="#a0a0a0" />
<rect x="559" y="593" width="2" height="2" fill="#a0a0a0" />
<rect x="559" y="597" width="2" height="2" fill="#a0a0a0" />
<rect x="576" y="587" width="15" height="15" fill="#ffffff" />
<rect x="576" y="587" width="15" height="1" fill="#ababab" />
<rect x="576" y="601" width="15" height="1" fill="#ababab" />
<rect x="576" y="587" width="1" height="15" fill="#ababab" />
<rect x="590" y="587" width="1" height="15" fill="#ababab" />
<path d="M586 590.5V598.5L581.5 594.5Z" fill="#6b6b6b" shape-rendering="geometricPrecision"/>
<rect x="591" y="587" width="279" height="15" fill="#ffffff" />
<rect x="591" y="587" width="279" height="1" fill="#ababab" />
<rect x="591" y="601" width="279" height="1" fill="#ababab" />
<rect x="591" y="587" width="1" height="15" fill="#ababab" />
<rect x="869" y="587" width="1" height="15" fill="#ababab" />
<rect x="870" y="587" width="26" height="15" fill="#dadada" />
<rect x="898" y="587" width="15" height="15" fill="#ffffff" />
<rect x="898" y="587" width="15" height="1" fill="#ababab" />
<rect x="898" y="601" width="15" height="1" fill="#ababab" />
<rect x="898" y="587" width="1" height="15" fill="#ababab" />
<rect x="912" y="587" width="1" height="15" fill="#ababab" />
<path d="M903 590.5V598.5L907.5 594.5Z" fill="#6b6b6b" shape-rendering="geometricPrecision"/>
<circle cx="65.5" cy="614.5" r="2.5" fill="#616161" shape-rendering="geometricPrecision"/>
<path d="M68.5 612.5H76V624H64V617.5" fill="none" stroke="#616161" stroke-width="1" shape-rendering="geometricPrecision"/>
<rect x="68" y="613" width="8" height="2" fill="#616161" />
<rect x="66" y="617" width="2" height="1" fill="#616161" />
<rect x="69" y="617" width="2" height="1" fill="#616161" />
<rect x="72" y="617" width="2" height="1" fill="#616161" />
<rect x="66" y="619" width="2" height="1" fill="#616161" />
<rect x="69" y="619" width="2" height="1" fill="#616161" />
<rect x="72" y="619" width="2" height="1" fill="#616161" />
<rect x="66" y="621" width="2" height="1" fill="#616161" />
<rect x="69" y="621" width="2" height="1" fill="#616161" />
<rect x="72" y="621" width="2" height="1" fill="#616161" />
<rect x="644" y="612" width="13" height="13" fill="#6b6b6b" />
<rect x="645" y="613" width="3" height="3" fill="#c6c6c6" />
<rect x="645" y="617" width="3" height="3" fill="#c6c6c6" />
<rect x="645" y="621" width="3" height="3" fill="#c6c6c6" />
<rect x="649" y="613" width="3" height="3" fill="#c6c6c6" />
<rect x="649" y="617" width="3" height="3" fill="#c6c6c6" />
<rect x="649" y="621" width="3" height="3" fill="#c6c6c6" />
<rect x="653" y="613" width="3" height="3" fill="#c6c6c6" />
<rect x="653" y="617" width="3" height="3" fill="#c6c6c6" />
<rect x="653" y="621" width="3" height="3" fill="#c6c6c6" />
<path d="M682.5 612.5H695.5V624.5H682.5Z" fill="none" stroke="#6b6b6b" stroke-width="1" shape-rendering="geometricPrecision"/>
<path d="M684.5 614.5H693.5V622.5H684.5Z" fill="none" stroke="#6b6b6b" stroke-width="1" shape-rendering="geometricPrecision"/>
<rect x="686" y="616" width="6" height="1" fill="#6b6b6b" />
<rect x="686" y="618" width="6" height="1" fill="#6b6b6b" />
<rect x="686" y="620" width="6" height="1" fill="#6b6b6b" />
<path d="M720.5 612.5H733.5V624.5H720.5Z" fill="none" stroke="#6b6b6b" stroke-width="1.2" shape-rendering="geometricPrecision"/>
<path d="M720.5 619.5H728.5V612.5M724.5 612.5V619.5" fill="none" stroke="#6b6b6b" stroke-width="1.2" shape-rendering="geometricPrecision"/>
<rect x="751" y="618" width="6" height="2" fill="#424242" />
<rect x="761" y="618" width="100" height="1" fill="#a0a0a0" />
<rect x="809" y="612" width="5" height="11" fill="#6b6b6b" />
<rect x="865" y="618" width="7" height="2" fill="#424242" />
<rect x="867.5" y="615" width="2" height="8" fill="#424242" />
</svg>
</body></html>
